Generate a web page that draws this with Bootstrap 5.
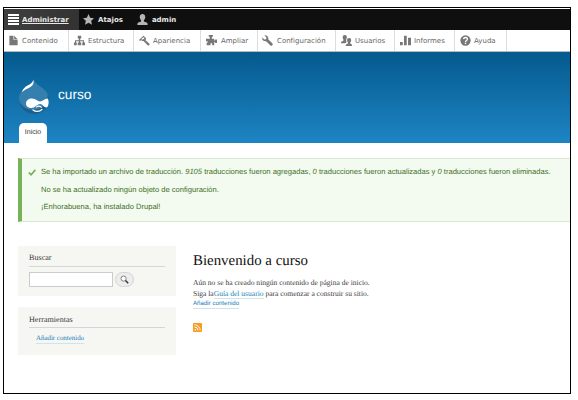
<!DOCTYPE html>
<html lang="es">
<head>
<meta charset="utf-8">
<meta name="viewport" content="width=device-width, initial-scale=1">
<title>Bienvenido a curso</title>
<link rel="stylesheet" href="https://cdn.jsdelivr.net/npm/bootstrap@5.3.0/dist/css/bootstrap.min.css">
<style>
body{background:#fff;font-family:"Liberation Sans",Arial,sans-serif;overflow:hidden;text-rendering:geometricPrecision}
.site-frame{width:568px;height:387px;margin:7px 0 0 3px;border:1px solid #000;background:#fff;padding-top:1px}
.serif{font-family:"Liberation Serif",Georgia,serif}
.admin-bar{height:21px;background:#0f0f0f;font:bold 7px/21px "DejaVu Sans",sans-serif}
.admin-bar a{color:#e8e8e8;height:21px;padding-left:4px}
.admin-bar a span{padding-top:1px}
.admin-bar a svg{flex:none;margin-right:4px;fill:#b5b5b5}
.admin-bar a.current{width:75px;background:linear-gradient(90deg,rgba(255,255,255,.2),rgba(255,255,255,.15));text-decoration:underline!important;color:#e8e8e8}
.admin-bar a.current svg{fill:#fff;margin-right:3px}
.tray{height:22px;background:#fff;border-bottom:1px solid #b5bcc1;font:7px/21px "DejaVu Sans",sans-serif}
.tray a{color:#666;height:21px;border-right:1px solid #ddd;padding-left:5px;flex:none}
.tray svg{fill:#777;width:11px;height:11px;flex:none}
.tray span{margin-left:3px;padding-top:1px}
.site-head{height:91px;background:linear-gradient(#055a8e,#1d84c3);padding:27px 15px 0}
.site-name{font-size:13.7px;line-height:16px;color:#fff;margin:8px 0 0 9px}
.main-tab{width:28px;height:21px;background:#fff;border-radius:5px 5px 0 0;color:#333;font-size:7px;line-height:20px;margin:9px 0 0}
.status{margin:15px 0 0 14px;height:64px;background:#f3faef;border:solid #d8e9cf;border-width:1px 0;border-left:4px solid #77b259;color:#3d6f27;font-size:7.57px;padding:4px 0 0 6px}
.status p{line-height:17.5px;margin:0;white-space:nowrap}
.status svg{margin:6px 5px 0 0;flex:none}
.page-body{margin:24px 0 0 14px}
.side{width:158px}
.block{background:#f6f6f2;padding:6px 11px 0;color:#3b3b3b}
.block h2{font-size:8.15px;line-height:13px;height:15px;border-bottom:1px solid #d6d6d6;margin:0}
.search-row{margin-top:5px}
.search-row input{width:84px;height:15px;border:1px solid #ccc;border-radius:0;background:#fff;padding:0 3px;font-size:7px}
.search-row button{width:19px;height:15px;border:1px solid #d4d4d4;border-radius:8px;background:#ededed;margin-left:2px;padding:0}
.content a,.block a{color:#1a80bb;text-decoration:none;border-bottom:1px solid #cfe3ef}
.block a{display:block;width:max-content;font-size:6.9px;line-height:9px;margin:6px 0 0 7px}
.content{margin-left:17px;color:#3b3b3b;font-size:7.54px}
.content h1{font-size:14.9px;line-height:18px;color:#111;margin:6px 0 7px}
.content p{line-height:11px;margin:0;white-space:nowrap}
.content .add{font:6.15px/8px "Liberation Sans",sans-serif;display:block;width:max-content;margin-top:1px}
</style>
<script src="https://cdn.jsdelivr.net/npm/bootstrap@5.3.0/dist/js/bootstrap.bundle.min.js"></script>
</head>
<body>
<div class="site-frame overflow-hidden">
<nav class="admin-bar d-flex">
<a href="#" class="current d-flex align-items-center"><svg width="11" height="11" viewBox="0 0 11 11"><path d="M0 0h11v2H0zM0 3h11v2H0zM0 6h11v2H0zM0 9h11v2H0z"/></svg><span>Administrar</span></a>
<a href="#" class="d-flex align-items-center text-decoration-none"><svg width="11" height="11" viewBox="0 0 16 16"><path d="M8 0l2.400 5.300 5.600.7-4.100 3.900 1.100 5.800L8 12.900l-5 2.800 1.100-5.800L0 6l5.600-.7z"/></svg><span>Atajos</span></a>
<a href="#" class="d-flex align-items-center text-decoration-none" style="margin-left:10px"><svg width="11" height="11" viewBox="0 0 16 16"><path d="M8 0c2.700 0 4 1.900 4 4.500 0 2-.8 3.600-1.900 4.500v1.800L14 12.500c1 .5 1.500 1.500 1.500 3.500H.5c0-2 .5-3 1.500-3.500l3.900-1.700V9C4.800 8.100 4 6.500 4 4.500 4 1.900 5.300 0 8 0z"/></svg><span>admin</span></a>
</nav>
<nav class="tray d-flex">
<a href="#" class="d-flex align-items-center text-decoration-none" style="width:65px;padding-left:4px"><svg viewBox="0 0 16 16"><path d="M2 1h6v6h6v8H2zM9 1l5 5H9z"/></svg><span>Contenido</span></a>
<a href="#" class="d-flex align-items-center text-decoration-none" style="width:65px"><svg viewBox="0 0 16 16"><path d="M5.500 1h5v4H9v2.500h5.500V11H16v4h-4v-4h1V9H9v2h1.500v4h-5v-4H7V9H3v2h1v4H0v-4h1.500V7.500H7V5H5.500z"/></svg><span>Estructura</span></a>
<a href="#" class="d-flex align-items-center text-decoration-none" style="width:67px"><svg viewBox="0 0 16 16"><path d="M6.500 1L0 7.200l1.400 1.500L3 7.300l1.600 1.500 2-.2 6 6.400c1.500 1.300 3.700-.8 2.500-2.400L9.500 7.500l.8-2.700zM6.200 3.200l2 1.700-3.400 2-1.500-1z" fill-rule="evenodd"/></svg><span>Apariencia</span></a>
<a href="#" class="d-flex align-items-center text-decoration-none" style="width:57px"><svg viewBox="0 0 16 16"><path d="M4 0h6v2L8.500 3v2.500H12V8h1.200V6.500H16v5h-2.800V10H12v5H9v-3H6.500v3H1V11h1.500V9H0V5.500h5.500V3L4 2z"/></svg><span style="margin-left:4px">Ampliar</span></a>
<a href="#" class="d-flex align-items-center text-decoration-none" style="width:78px;padding-left:4px"><svg viewBox="0 0 16 16"><path d="M3.500.5l3 3L6 6 3.500 6.500l-3-3C-.4 7 2.500 9.800 6 9l6.300 6.300c2 1.300 4.200-1 3-3L9 6C9.800 2.500 7-.4 3.500.5z"/></svg><span style="margin-left:4px">Configuración</span></a>
<a href="#" class="d-flex align-items-center text-decoration-none" style="width:59px"><svg viewBox="0 0 16 16"><path d="M5.500 0c2 0 3 1.300 3 3.300 0 .8-.2 1.500-.5 2-.6.8-.8 2-.5 3 .2 1 .6 1.700 1 2.200-1.500.5-2.200 1-2.500 1.500H0c0-2 .4-2.600 3.500-3.500V6.700C2.900 5.900 2.500 4.900 2.500 3.300 2.500 1.300 3.500 0 5.500 0z"/><path d="M11.800 4.200c2 0 3 1.300 3 3.300 0 1.500-.6 2.500-1.300 3.200v1.600c2.300.7 2.500 1.500 2.500 3.700H6.800c0-2.200.5-3 3.300-3.700v-1.600C9.300 10 8.800 9 8.800 7.500c0-2 1-3.300 3-3.300z"/></svg><span>Usuarios</span></a>
<a href="#" class="d-flex align-items-center text-decoration-none" style="width:60px"><svg viewBox="0 0 16 16"><path d="M0 10h4v5H0zM5.800 1h4v14h-4zM11.700 4H16v11h-4.300z"/></svg><span>Informes</span></a>
<a href="#" class="d-flex align-items-center text-decoration-none" style="width:52px"><svg viewBox="0 0 16 16"><circle cx="8" cy="8" r="7.500"/><path d="M5.200 6c.2-3.200 5.600-3 5.600-.2C10.800 8 8 7.800 8 10" stroke="#fff" stroke-width="1.900" fill="none"/><path d="M7 11.200h2v2H7z" style="fill:#fff"/></svg><span>Ayuda</span></a>
</nav>
<header class="site-head">
<div class="d-flex align-items-start">
<svg width="30" height="35" viewBox="0 0 30 35"><path d="M14.500 0c1 3.500 4 5.500 7.500 8 4.500 3.200 8 6.500 8 12.500C30 29 23.500 35 15.200 35 6.500 35 0 28.500 0 20.500 0 14 3.500 10.300 8 7.500c3.500-2.200 5.700-4 6.500-7.500z" fill="#347fae"/><path d="M0 20.500C0 28.500 6.500 35 15.200 35 23.500 35 30 29 30 20.500c0-2-.4-3.800-1.200-5.400C29 24 23 31 14.500 31 7.500 31 1.500 27 0 20.500z" fill="#1b5f8e"/><path d="M14.300 1c1 3-.5 6-4.500 8-3.500 1.600-4.800 2.500-6.800 4.200C3.500 10 6 8 9 6.300c3-1.600 4.500-2.800 5.300-5.300z" fill="#fff"/><path d="M7 24.500c0-3 2.500-5 6-5 4 0 5.500 3 8 3s4-2.500 7-3c2.500 0 2 8.500-.5 9-2.500 0-4-3.500-6.500-3.500-3 0-5 4-8.500 4-3.200 0-5.500-1.700-5.500-4.500z" fill="#fff"/><path d="M17.500 28c1-1.300 4-1.300 4.800.3M14 31c2.500 2 6.500 2 9-.5" fill="none" stroke="#fff" stroke-width="1.200" stroke-linecap="round"/></svg>
<div class="site-name">curso</div>
</div>
<div class="main-tab text-center">Inicio</div>
</header>
<section class="status d-flex align-items-start">
<svg width="8" height="7" viewBox="0 0 8 7"><path d="M.7 3.500L3 5.700 7.400.9" fill="none" stroke="#73b355" stroke-width="1.700"/></svg>
<div>
<p>Se ha importado un archivo de traducción. <em>9105</em> traducciones fueron agregadas, <em>0</em> traducciones fueron actualizadas y <em>0</em> traducciones fueron eliminadas.</p>
<p>No se ha actualizado ningún objeto de configuración.</p>
<p>¡Enhorabuena, ha instalado Drupal!</p>
</div>
</section>
<div class="page-body d-flex align-items-start">
<aside class="side serif">
<div class="block" style="height:50px;padding-top:5px"><h2 style="height:16px">Buscar</h2>
<div class="search-row d-flex"><input type="text" aria-label="Buscar"><button type="button" class="d-flex align-items-center justify-content-center" aria-label="Buscar"><svg width="9" height="9" viewBox="0 0 9 9"><circle cx="3.600" cy="3.600" r="2.600" fill="#fff" stroke="#666" stroke-width=".8"/><path d="M5.500 5.500l2.700 2.700" stroke="#333" stroke-width="1.500"/></svg></button></div></div>
<div class="block" style="height:48px;margin-top:11px;padding-top:6px"><h2>Herramientas</h2><a href="#">Añadir contenido</a></div>
</aside>
<main class="content serif">
<h1>Bienvenido a curso</h1>
<p>Aún no se ha creado ningún contenido de página de inicio.</p>
<p>Siga la<a href="#">Guía del usuario</a> para comenzar a construir su sitio.</p>
<a href="#" class="add">Añadir contenido</a>
<svg class="d-block" style="margin-top:14px" width="9" height="9" viewBox="0 0 9 9"><rect width="9" height="9" rx="1" fill="#f99b1c"/><circle cx="2.300" cy="6.800" r=".8" fill="#fff"/><path d="M1.500 4a3.500 3.500 0 013.500 3.500M1.500 1.800a5.700 5.700 0 015.700 5.700" stroke="#fff" fill="none"/></svg>
</main>
</div>
</div>
</body>
</html>
